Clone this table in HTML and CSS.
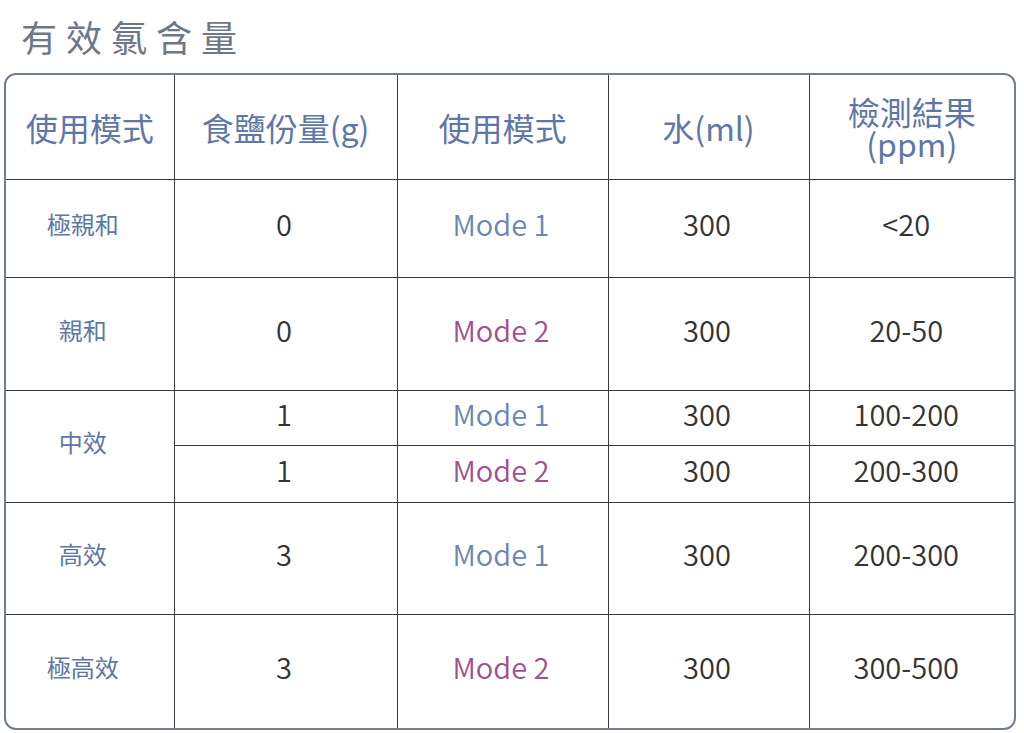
FILE: index.html
```html
<!DOCTYPE html>
<html lang="zh-Hant">
<head>
<meta charset="utf-8">
<link rel="stylesheet" href="styles.css">
</head>
<body>
<h1 class="title">有效氯含量</h1>
<div class="frame">
<table class="grid">
  <colgroup>
    <col class="c1"><col class="c2"><col class="c3"><col class="c4"><col class="c5">
  </colgroup>
  <thead>
    <tr class="h-head">
      <th>使用模式</th>
      <th>食鹽份量(g)</th>
      <th>使用模式</th>
      <th>水(ml)</th>
      <th class="last two"><span class="l1">檢測結果</span><span class="l2">(ppm)</span></th>
    </tr>
  </thead>
  <tbody>
    <tr class="h-r1">
      <td class="label">極親和</td>
      <td class="num">0</td>
      <td class="mode1">Mode 1</td>
      <td class="num">300</td>
      <td class="num last">&lt;20</td>
    </tr>
    <tr class="h-r2">
      <td class="label">親和</td>
      <td class="num">0</td>
      <td class="mode2">Mode 2</td>
      <td class="num">300</td>
      <td class="num last">20-50</td>
    </tr>
    <tr class="h-r3a">
      <td class="label" rowspan="2">中效</td>
      <td class="num">1</td>
      <td class="mode1">Mode 1</td>
      <td class="num">300</td>
      <td class="num last">100-200</td>
    </tr>
    <tr class="h-r3b">
      <td class="num">1</td>
      <td class="mode2">Mode 2</td>
      <td class="num">300</td>
      <td class="num last">200-300</td>
    </tr>
    <tr class="h-r4">
      <td class="label">高效</td>
      <td class="num">3</td>
      <td class="mode1">Mode 1</td>
      <td class="num">300</td>
      <td class="num last">200-300</td>
    </tr>
    <tr class="h-r5 bottom">
      <td class="label">極高效</td>
      <td class="num">3</td>
      <td class="mode2">Mode 2</td>
      <td class="num">300</td>
      <td class="num last">300-500</td>
    </tr>
  </tbody>
</table>
</div>
</body>
</html>
```
FILE: styles.css
```css
html, body {
  margin: 0;
  padding: 0;
  background: #ffffff;
}
body {
  font-family: "Noto Sans CJK TC", "Noto Sans", sans-serif;
  padding: 0 8px 0 4px;
}
.title {
  margin: 0;
  padding: 14px 0 0 17px;
  height: 73px;
  box-sizing: border-box;
  font-size: 36px;
  line-height: 44px;
  font-weight: 400;
  letter-spacing: 9px;
  color: #6f7787;
}
.frame {
  width: 1012px;
  box-sizing: border-box;
  border: 2px solid #737d92;
  border-radius: 12px;
  overflow: hidden;
}
.grid {
  width: 100%;
  border-collapse: collapse;
  table-layout: fixed;
}
.c1 { width: 168px; }
.c2 { width: 223px; }
.c3 { width: 211px; }
.c4 { width: 201px; }
.c5 { width: auto; }
.grid th, .grid td {
  padding: 0 3px 10px 0;
  text-align: center;
  vertical-align: middle;
  line-height: 36px;
  border-right: 1.5px solid #3a3a3e;
  border-bottom: 1.5px solid #3a3a3e;
}
.grid .last { border-right: none; }
.grid .bottom td { border-bottom: none; }
.grid th {
  padding: 0;
  font-size: 32px;
  font-weight: 400;
  color: #5d77a8;
  line-height: 38px;
}
.l1, .l2 {
  display: block;
  line-height: 32px;
}
.h-head { height: 104px; }
.h-r1 { height: 98px; }
.h-r2 { height: 113px; }
.h-r3a { height: 55px; }
.h-r3b { height: 57px; }
.h-r4 { height: 112px; }
.h-r5 { height: 114px; }
.grid td.label {
  padding-right: 14px;
  padding-bottom: 8px;
  font-size: 24px;
  color: #5d77a8;
}
.grid td.last {
  padding-right: 11px;
}
.num {
  font-size: 29px;
  font-weight: 350;
  color: #333336;
}
.mode1 {
  font-size: 29px;
  font-weight: 350;
  color: #6b86b6;
}
.mode2 {
  font-size: 29px;
  font-weight: 350;
  color: #a3508f;
}
```
